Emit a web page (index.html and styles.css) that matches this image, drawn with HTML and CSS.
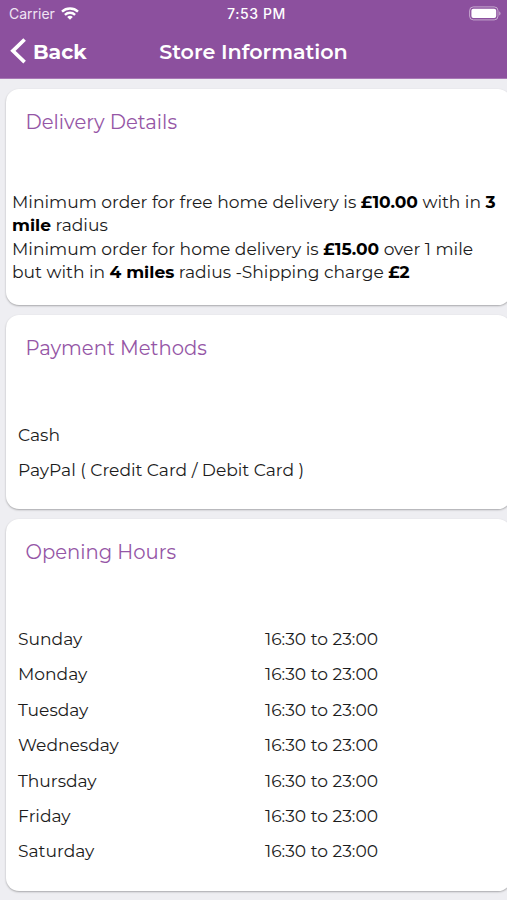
FILE: index.html
```html
<!DOCTYPE html>
<html lang="en">

<head>
    <meta charset="UTF-8">
    <meta name="viewport" content="width=device-width, initial-scale=1.0">
    <title>Store Information</title>
    <link rel="stylesheet" href="styles.css">
</head>

<body>
    <header>
        <div class="status-bar">
            <div class="carrier">
                <span>Carrier</span>
                <svg width="18" height="13" viewBox="0 0 18 13" fill="none" stroke="#fff" stroke-width="2.4">
                    <path d="M1 4.6C5.4.4 12.6.4 17 4.6" />
                    <path d="M3.9 7.8c2.9-2.7 7.3-2.7 10.2 0" />
                    <path d="M9 12.7L6.2 9.9c1.6-1.4 4-1.4 5.6 0z" fill="#fff" stroke="none" />
                </svg>
            </div>
            <div class="time">7:53 PM</div>
            <div class="battery">
                <svg width="32" height="15" viewBox="0 0 32 15">
                    <rect x=".6" y=".9" width="28.4" height="13" rx="3.8" fill="none" stroke="#fff" stroke-opacity=".5" />
                    <rect x="2.4" y="2.7" width="24.8" height="9.4" rx="2" fill="#fff" />
                    <path d="M30.2 5.2c1.8.8 1.8 3.6 0 4.4z" fill="#fff" fill-opacity=".5" />
                </svg>
            </div>
        </div>
        <div class="nav-bar">
            <a class="back" href="#">
                <svg width="16" height="26" viewBox="0 0 16 26" fill="none" stroke="#fff" stroke-width="3.7">
                    <path d="M14.6 1.5L2.9 12.8l11.7 11.3" />
                </svg>
                <span>Back</span>
            </a>
            <h1>Store Information</h1>
        </div>
    </header>

    <main>
        <section class="card delivery">
            <h2>Delivery Details</h2>
            <p>Minimum order for free home delivery is <b>£10.00</b> with in <b>3</b><br>
                <b>mile</b> radius<br>
                Minimum order for home delivery is <b>£15.00</b> over 1 mile<br>
                but with in <b>4 miles</b> radius -Shipping charge <b>£2</b></p>
        </section>

        <section class="card payment">
            <h2>Payment Methods</h2>
            <ul>
                <li>Cash</li>
                <li>PayPal ( Credit Card / Debit Card )</li>
            </ul>
        </section>

        <section class="card hours">
            <h2>Opening Hours</h2>
            <ul>
                <li><span>Sunday</span><span>16:30 to 23:00</span></li>
                <li><span>Monday</span><span>16:30 to 23:00</span></li>
                <li><span>Tuesday</span><span>16:30 to 23:00</span></li>
                <li><span>Wednesday</span><span>16:30 to 23:00</span></li>
                <li><span>Thursday</span><span>16:30 to 23:00</span></li>
                <li><span>Friday</span><span>16:30 to 23:00</span></li>
                <li><span>Saturday</span><span>16:30 to 23:00</span></li>
            </ul>
        </section>
    </main>
</body>

</html>
```
FILE: styles.css
```css
* {
    box-sizing: border-box;
}

body {
    margin: 0;
    height: 900px;
    overflow: hidden;
    background-color: #eeeef2;
    color: #1c1c1c;
    font-family: Montserrat, Inter, sans-serif;
    font-size: 17.1px;
}

header {
    height: 79px;
    background-color: #8c509e;
    color: #fff;
    border-bottom: 1px solid #a878b5;
}

.status-bar {
    display: grid;
    grid-template-columns: 1fr auto 1fr;
    align-items: center;
    height: 27px;
    padding: 0 6px 0 9px;
    font-family: Inter, sans-serif;
    font-size: 14px;
}

.carrier {
    display: flex;
    align-items: center;
    gap: 6px;
    color: #f0e4f3;
}

.time {
    padding-left: 3px;
    font-weight: 500;
    letter-spacing: 0.6px;
}

.battery {
    display: flex;
    justify-content: flex-end;
}

.nav-bar {
    display: grid;
    grid-template-columns: 1fr auto 1fr;
    align-items: center;
    height: 48px;
    padding: 0 10px;
}

.back {
    display: flex;
    align-items: center;
    gap: 7px;
    color: #fff;
    font-size: 20.4px;
    font-weight: 700;
    text-decoration: none;
}

h1 {
    margin: 0;
    font-size: 20.7px;
    font-weight: 600;
}

main {
    display: flex;
    flex-direction: column;
    gap: 10px;
    padding: 10px 0 0 6px;
}

.card {
    flex: none;
    width: 505px;
    background-color: #fff;
    border-radius: 13px;
    box-shadow: 0 1px 2px rgba(0, 0, 0, 0.3);
}

.delivery {
    height: 216px;
}

.payment {
    height: 194px;
}

.hours {
    height: 372px;
}

h2 {
    margin: 0;
    padding: 19px 19.5px 0;
    color: #9556a6;
    font-size: 19.6px;
    font-weight: 400;
    line-height: 28px;
}

.card p {
    margin: 54px 0 0 6px;
    line-height: 23.3px;
    white-space: nowrap;
}

.card b {
    color: #000;
    font-weight: 700;
}

ul {
    margin: 55px 0 0;
    padding: 0 12px;
    list-style: none;
}

li {
    display: grid;
    grid-template-columns: 247px 1fr;
    height: 35.4px;
    line-height: 36px;
    white-space: nowrap;
}

.payment li {
    display: block;
}
```
